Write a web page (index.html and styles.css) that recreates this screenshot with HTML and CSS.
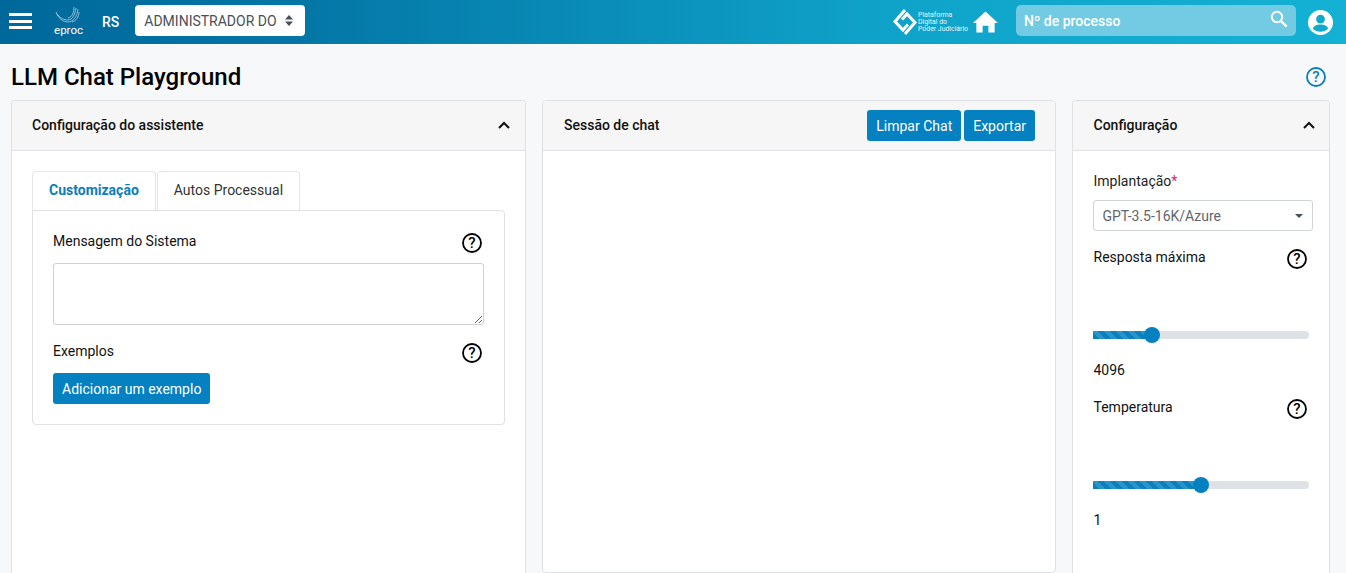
FILE: index.html
```html
<!DOCTYPE html>
<html lang="pt-BR">
<head>
  <meta charset="UTF-8" />
  <title>LLM Chat Playground</title>
  <link rel="stylesheet" href="styles.css">
</head>
<body>
  <header class="topbar">
    <div class="topbar-left">
      <button class="menu-btn" aria-label="Menu"><span></span><span></span><span></span></button>
      <div class="eproc">
        <svg width="26" height="17" viewBox="0 0 26 17" fill="none" stroke="#fff" stroke-width="0.7" opacity="0.8">
          <path d="M1 5c2 6 7 10 12 10 5 0 9-5 10-13"/>
          <path d="M2 7c3 4 7 6 11 6 4 0 7-5 8-12"/>
          <path d="M19 0c0 6-2 10-6 11"/>
          <path d="M24 5c0 5-3 9-7 10"/>
        </svg>
        <span class="eproc-name">eproc</span>
      </div>
      <span class="state">RS</span>
      <div class="role-select">
        <span>ADMINISTRADOR DO</span>
        <svg width="8" height="11" viewBox="0 0 8 11" fill="#495057"><path d="M4 0l4 4.400H0zM4 11L0 6.600h8z"/></svg>
      </div>
    </div>
    <div class="topbar-right">
      <div class="pdpj">
        <svg width="24" height="28" viewBox="0 0 24 28" fill="none" stroke="#fff" stroke-width="3">
          <path d="M12 2L2 13.500 10 22l5-5.500"/>
          <path d="M12 26l10-11.500L14 6l-5 5.500"/>
        </svg>
        <span class="pdpj-name">Plataforma<br>Digital do<br>Poder Judiciário</span>
      </div>
      <svg class="home" width="25" height="22" viewBox="0 0 26 22" fill="#fff"><path d="M13 0L0 12h3.500v10h6.500v-7h6v7h6.500V12H26z"/></svg>
      <div class="search">
        <span>Nº de processo</span>
        <svg width="18" height="18" viewBox="0 0 20 20" fill="none" stroke="#fff" stroke-width="2.200"><circle cx="7.800" cy="7.800" r="5.800"/><path d="M12 12l6.500 6.500" stroke-width="2.800"/></svg>
      </div>
      <svg class="avatar" width="25" height="25" viewBox="0 0 26 26"><circle cx="13" cy="13" r="13" fill="#fff"/><circle cx="13" cy="9.500" r="4.500" fill="#10a9cd"/><path d="M5 19.500c1-3.500 4.500-4.500 8-4.500s7 1 8 4.500c-2 2-5 3.200-8 3.200s-6-1.200-8-3.200z" fill="#10a9cd"/></svg>
    </div>
  </header>

  <div class="title-row">
    <h1>LLM Chat Playground</h1>
    <svg class="help help-blue" width="20" height="20" viewBox="0 0 20 20"><circle cx="10" cy="10" r="9" fill="none" stroke="currentColor" stroke-width="1.800"/><text x="10" y="15" text-anchor="middle" class="help-mark">?</text></svg>
  </div>

  <main class="columns">
    <section class="card card-cut">
      <div class="card-head">
        <h2>Configuração do assistente</h2>
        <svg class="chevron" width="12" height="8" viewBox="0 0 12 8" fill="none" stroke="#111" stroke-width="2"><path d="M1 7l5-5 5 5"/></svg>
      </div>
      <div class="assistant-body">
        <div class="tabs">
          <div class="tab tab-active">Customização</div>
          <div class="tab">Autos Processual</div>
        </div>
        <div class="tab-panel">
          <div class="label-row">
            <label>Mensagem do Sistema</label>
            <svg class="help" width="20" height="20" viewBox="0 0 20 20"><circle cx="10" cy="10" r="9" fill="none" stroke="currentColor" stroke-width="1.800"/><text x="10" y="15" text-anchor="middle" class="help-mark">?</text></svg>
          </div>
          <textarea class="system-msg"></textarea>
          <div class="label-row examples-row">
            <label>Exemplos</label>
            <svg class="help" width="20" height="20" viewBox="0 0 20 20"><circle cx="10" cy="10" r="9" fill="none" stroke="currentColor" stroke-width="1.800"/><text x="10" y="15" text-anchor="middle" class="help-mark">?</text></svg>
          </div>
          <button class="btn">Adicionar um exemplo</button>
        </div>
      </div>
    </section>

    <section class="card chat-card">
      <div class="card-head">
        <h2>Sessão de chat</h2>
        <div class="head-actions">
          <button class="btn">Limpar Chat</button>
          <button class="btn">Exportar</button>
        </div>
      </div>
    </section>

    <section class="card card-cut config-card">
      <div class="card-head">
        <h2>Configuração</h2>
        <svg class="chevron" width="12" height="8" viewBox="0 0 12 8" fill="none" stroke="#111" stroke-width="2"><path d="M1 7l5-5 5 5"/></svg>
      </div>
      <div class="config-body">
        <label class="field-label">Implantação<span class="req">*</span></label>
        <div class="model-select">
          <span>GPT-3.5-16K/Azure</span>
          <i class="caret"></i>
        </div>
        <div class="label-row slider-label">
          <label>Resposta máxima</label>
          <svg class="help" width="20" height="20" viewBox="0 0 20 20"><circle cx="10" cy="10" r="9" fill="none" stroke="currentColor" stroke-width="1.800"/><text x="10" y="15" text-anchor="middle" class="help-mark">?</text></svg>
        </div>
        <div class="slider"><div class="slider-fill" style="width:27.500%"></div><div class="slider-thumb" style="left:27.500%"></div></div>
        <div class="slider-value">4096</div>
        <div class="label-row slider-label">
          <label>Temperatura</label>
          <svg class="help" width="20" height="20" viewBox="0 0 20 20"><circle cx="10" cy="10" r="9" fill="none" stroke="currentColor" stroke-width="1.800"/><text x="10" y="15" text-anchor="middle" class="help-mark">?</text></svg>
        </div>
        <div class="slider"><div class="slider-fill" style="width:50%"></div><div class="slider-thumb" style="left:50%"></div></div>
        <div class="slider-value">1</div>
      </div>
    </section>
  </main>
</body>
</html>
```

FILE: styles.css
```css
html, body {
  height: 573px;
  overflow: hidden;
}
body {
  margin: 0;
  background: #f7f8fa;
  color: #111;
  font-family: Roboto, "Liberation Sans", sans-serif;
  font-size: 14px;
}
button {
  font-family: inherit;
}

/* top bar */
.topbar {
  height: 44px;
  display: flex;
  align-items: center;
  justify-content: space-between;
  background: linear-gradient(90deg, #00689b 0%, #0476a6 22%, #0fa2c8 65%, #14b1d4 100%);
}
.topbar-left, .topbar-right {
  display: flex;
  align-items: center;
}
.menu-btn {
  width: 23px;
  height: 16px;
  margin-left: 9px;
  margin-bottom: 2px;
  padding: 0;
  border: 0;
  background: none;
  display: flex;
  flex-direction: column;
  justify-content: space-between;
}
.menu-btn span {
  display: block;
  height: 3px;
  background: #fff;
}
.eproc {
  width: 28px;
  margin-left: 22px;
  display: flex;
  flex-direction: column;
  align-items: center;
  color: #fff;
}
.eproc svg {
  margin-top: -2px;
}
.eproc-name {
  font-size: 11.500px;
  line-height: 12px;
  margin-left: 1px;
  font-weight: 400;
}
.state {
  margin-left: 20px;
  color: #fff;
  font-weight: 500;
  font-size: 14px;
}
.role-select {
  width: 170px;
  height: 31px;
  box-sizing: border-box;
  margin-left: 16px;
  margin-bottom: 3px;
  padding: 0 12px 0 9px;
  display: flex;
  align-items: center;
  justify-content: space-between;
  background: #fff;
  border-radius: 4px;
  color: #495057;
  font-size: 14px;
}
.pdpj {
  display: flex;
  align-items: center;
  color: #fff;
  gap: 1px;
}
.pdpj-name {
  font-size: 6.900px;
  line-height: 7px;
  opacity: 0.9;
}
.home {
  margin-left: 5px;
}
.search {
  width: 280px;
  height: 31px;
  box-sizing: border-box;
  margin-left: 18px;
  margin-bottom: 3px;
  padding: 0 8px 0 8px;
  display: flex;
  align-items: center;
  justify-content: space-between;
  background: #72cbe2;
  border-radius: 5px;
  color: #fff;
  font-size: 14px;
  font-weight: 500;
}
.search svg {
  margin-bottom: 3px;
}
.avatar {
  margin: 0 13px 0 12px;
}

/* title */
.title-row {
  height: 56px;
  box-sizing: border-box;
  padding: 10px 20px 0 11px;
  display: flex;
  align-items: center;
  justify-content: space-between;
}
h1 {
  margin: 0;
  font-size: 24px;
  font-weight: 500;
  color: #000;
}
.help {
  display: block;
  flex: none;
  color: #000;
}
.help-blue {
  color: #0a7dbb;
}
.help-mark {
  font-size: 15px;
  font-weight: 500;
  fill: currentColor;
}

/* columns */
.columns {
  display: grid;
  grid-template-columns: 515px 514px 258px;
  column-gap: 16px;
  padding-left: 11px;
}
.card {
  height: 473px;
  box-sizing: border-box;
  background: #fff;
  border: 1px solid #dfe1e5;
  border-radius: 4px;
}
/* left and right cards run on below the fold */
.card-cut {
  border-bottom: 0;
  border-radius: 4px 4px 0 0;
}
.card-head {
  height: 50px;
  box-sizing: border-box;
  padding: 0 15px 2px 20px;
  display: flex;
  align-items: center;
  justify-content: space-between;
  background: #f6f6f6;
  border-bottom: 1px solid #dfe1e5;
  border-radius: 4px 4px 0 0;
}
.chat-card .card-head {
  padding: 0 15px 0 21px;
}
.chat-card h2 {
  margin-bottom: 2px;
}
.config-card .card-head {
  padding: 0 14px 2px 20.500px;
}
h2 {
  margin: 0;
  font-size: 14px;
  font-weight: 500;
  color: #111;
}
.head-actions {
  display: flex;
  gap: 3px;
  margin-right: 5px;
}
.btn {
  height: 31px;
  padding: 0 9px;
  background: #0580c0;
  border: 0;
  border-radius: 3px;
  color: #fff;
  font-size: 14px;
}

/* assistant panel */
.assistant-body {
  padding: 20px 20px 0;
}
.tabs {
  display: flex;
  gap: 1px;
  height: 39px;
}
.tab {
  padding: 0 16px 2px;
  display: flex;
  align-items: center;
  border: 1px solid #e3e5e8;
  border-bottom: 0;
  border-radius: 4px 4px 0 0;
  color: #333;
}
.tab-active {
  color: #0a7dbb;
  font-weight: 700;
}
.tab-panel {
  height: 215px;
  box-sizing: border-box;
  padding: 22px 20px 0;
  border: 1px solid #dfe1e5;
  border-radius: 0 4px 4px 4px;
}
.label-row {
  display: flex;
  justify-content: space-between;
  padding-right: 2px;
}
.system-msg {
  display: block;
  width: 431px;
  height: 62px;
  box-sizing: border-box;
  margin: 10px 0 0;
  border: 1px solid #ced1d6;
  border-radius: 3px;
}
.examples-row {
  margin-top: 18px;
}
.tab-panel .btn {
  margin-top: 10px;
}
label {
  line-height: 16px;
}

/* config panel */
.config-body {
  padding: 22px 16px 0 20px;
}
.field-label, .slider-label label, .slider-value {
  margin-left: 0.500px;
}
.field-label {
  display: block;
  color: #222;
}
.req {
  color: #e5225f;
}
.model-select {
  height: 31px;
  box-sizing: border-box;
  margin-top: 11px;
  padding: 0 9px 0 8.500px;
  display: flex;
  align-items: center;
  justify-content: space-between;
  border: 1px solid #ced4da;
  border-radius: 3px;
  color: #5f666d;
}
.caret {
  display: block;
  width: 0;
  height: 0;
  border-left: 4px solid transparent;
  border-right: 4px solid transparent;
  border-top: 4px solid #495057;
}
.slider-label {
  padding-right: 6px;
}
.config-body > .slider-label {
  margin-top: 18px;
}
.slider-value + .slider-label {
  margin-top: 21px;
}
.slider {
  position: relative;
  width: 216px;
  height: 8px;
  margin-top: 62px;
  background: #dee2e6;
  border-radius: 4px;
}
.slider-fill {
  height: 100%;
  background: repeating-linear-gradient(45deg, #0a80bf 0 4.250px, #2a93c9 4.250px 8.500px);
}
.slider-thumb {
  position: absolute;
  top: -4px;
  width: 16px;
  height: 16px;
  margin-left: -8px;
  background: #0580c0;
  border-radius: 50%;
}
.slider-value {
  margin-top: 23px;
  line-height: 16px;
}
```
